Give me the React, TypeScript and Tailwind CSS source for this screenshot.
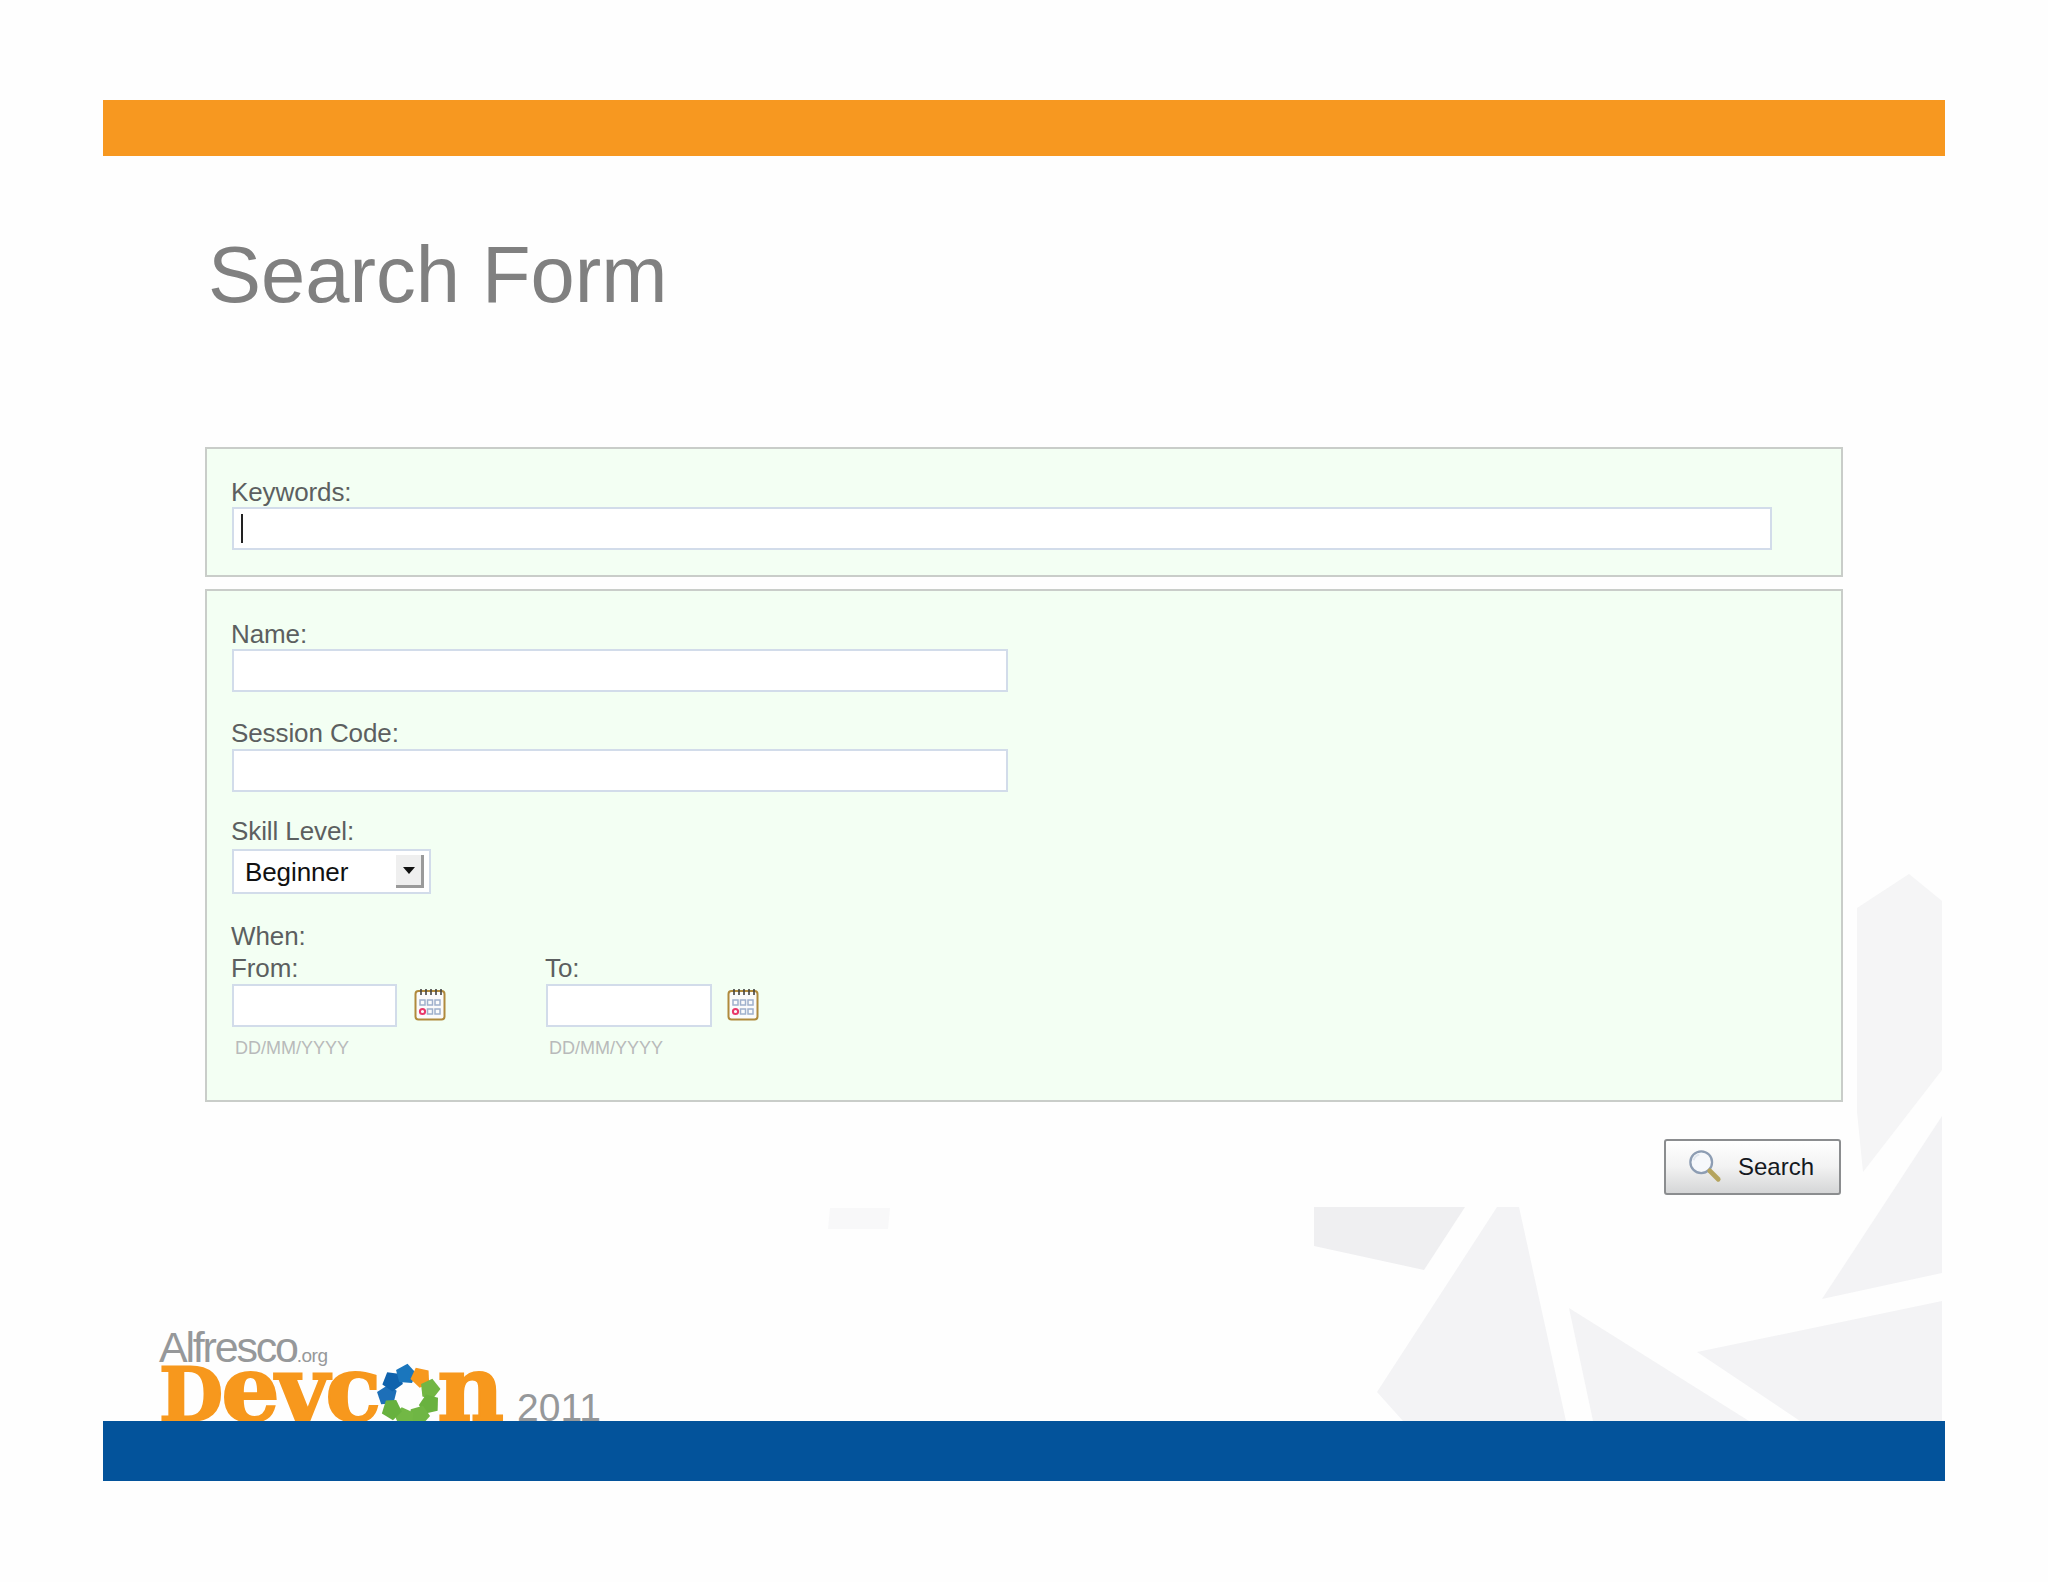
const labelClass = "block h-[30px] text-[26px] leading-[30px] tracking-[-0.1px] text-[#5c5f60]";
const inputClass = "block ml-px h-[43px] border-2 border-[#d2dcea] bg-white";

const BLADES = [
  { angle: 270, fill: "#1d6fb8" },
  { angle: 310, fill: "#0f62ad" },
  { angle: 350, fill: "#1a76bd" },
  { angle: 30, fill: "#f7981d" },
  { angle: 70, fill: "#72b644" },
  { angle: 110, fill: "#69b23f" },
  { angle: 150, fill: "#6fb644" },
  { angle: 190, fill: "#72b845" },
  { angle: 230, fill: "#67b13f" },
];

function Backdrop() {
  return (
    <svg className="absolute inset-0" width="2048" height="1582" viewBox="0 0 2048 1582">
      <g fill="#f3f3f5">
        <polygon points="1857,908 1909,874 1942,901 1942,1070 1863,1172 1857,1112" fill="#f5f5f6" />
        <polygon points="1942,1116 1942,1273 1822,1299" />
        <polygon points="1314,1207 1465,1207 1424,1270 1314,1246" fill="#efeff1" />
        <polygon points="1497,1207 1519,1207 1566,1421 1403,1421 1377,1392" />
        <polygon points="1569,1308 1749,1421 1593,1421" />
        <polygon points="1697,1352 1942,1301 1942,1421 1800,1421" />
        <polygon points="830,1208 890,1208 888,1229 828,1229" fill="#f8f8f9" />
      </g>
    </svg>
  );
}

function CalendarIcon() {
  return (
    <svg width="32" height="33" viewBox="0 0 32 33" className="shrink-0 mt-[-2px]">
      <rect x="1.5" y="3" width="29" height="28.5" rx="3" fill="#fbfbfb" stroke="#b08a3c" strokeWidth="2" />
      <path d="M7 1v6M12 1v6M17 1v6M22 1v6M27 1v6" stroke="#444" strokeWidth="1.6" />
      <g fill="none" stroke="#9fb0cc" strokeWidth="1.5">
        <rect x="6" y="12" width="5" height="5" />
        <rect x="13.5" y="12" width="5" height="5" />
        <rect x="21" y="12" width="5" height="5" />
        <rect x="13.5" y="21" width="5" height="5" />
        <rect x="21" y="21" width="5" height="5" />
      </g>
      <circle cx="8.5" cy="23.5" r="2.6" fill="none" stroke="#e8386a" strokeWidth="2" />
    </svg>
  );
}

function MagnifierIcon() {
  return (
    <svg width="34" height="34" viewBox="0 0 36 36" className="shrink-0 mt-[-2px]">
      <circle cx="14" cy="14" r="11.5" fill="#f6f8fb" stroke="#8d9db3" strokeWidth="2.4" />
      <path d="M6 12a8 8 0 0 1 6-6" fill="none" stroke="#dfe6ee" strokeWidth="2" />
      <path d="M23 23l9 9" stroke="#b5a45e" strokeWidth="5" strokeLinecap="round" />
    </svg>
  );
}

function Pinwheel() {
  return (
    <svg width="66" height="66" viewBox="-32 -32 64 64" className="shrink-0 ml-[-1px] mr-[-5px] self-end mb-[-8px]">
      {BLADES.map((b) => (
        <polygon
          key={b.angle}
          points="-8,-27 4,-31 11,-20 5,-12 -7,-15"
          fill={b.fill}
          transform={`rotate(${b.angle})`}
        />
      ))}
    </svg>
  );
}

function DateField({ label, inputWidth, gap }: { label: string; inputWidth: string; gap: string }) {
  return (
    <div>
      <div className="h-[32px] text-[26px] leading-[32px] tracking-[-0.1px] text-[#5c5f60]">{label}</div>
      <div className="flex items-center">
        <input readOnly className={`${inputClass} ${inputWidth} ${gap}`} />
        <CalendarIcon />
      </div>
      <div className="mt-[8px] ml-[4px] h-[26px] text-[18px] leading-[26px] text-[#b8baba]">DD/MM/YYYY</div>
    </div>
  );
}

export default function App() {
  return (
    <div className="relative w-[2048px] h-[1582px] overflow-hidden bg-[#fefefe] font-['Liberation_Sans',Arial,sans-serif]">
      <Backdrop />
      <div className="relative flex h-full flex-col pt-[100px] pb-[101px]">
        <div className="mx-[103px] h-[56px] shrink-0 bg-[#f79820]" />

        <h1 className="ml-[208px] mt-[74px] text-[79.5px] leading-[90px] text-[#808080]">Search Form</h1>

        <form className="ml-[205px] mt-[127px] w-[1638px]">
          <section className="h-[130px] border-2 border-[#c9cdc9] bg-[#f3fff3] pl-[24px] pt-[28px]">
            <label className={labelClass}>Keywords:</label>
            <div className={`${inputClass} w-[1540px] flex items-center pl-[7px]`}>
              <span className="h-[29px] w-[2px] bg-[#222]" />
            </div>
          </section>

          <section className="mt-[12px] h-[513px] border-2 border-[#c9cdc9] bg-[#f3fff3] pl-[24px] pt-[28px]">
            <label className={labelClass}>Name:</label>
            <input readOnly className={`${inputClass} w-[776px]`} />

            <label className={`${labelClass} mt-[26px] mb-px`}>Session Code:</label>
            <input readOnly className={`${inputClass} w-[776px]`} />

            <label className={`${labelClass} mt-[24px] mb-[3px]`}>Skill Level:</label>
            <div className="ml-px flex h-[45px] w-[199px] items-center justify-between border-2 border-[#d2dcea] bg-white pl-[11px] pr-[5px]">
              <span className="text-[26px] leading-none tracking-[-0.1px] text-[#111]">Beginner</span>
              <span className="flex h-[33px] w-[28px] items-center justify-center border-r-[3px] border-b-[3px] border-r-[#9a9a9a] border-b-[#9a9a9a] bg-[#efefef]">
                <svg width="12" height="7" viewBox="0 0 12 7">
                  <path d="M0 0h12L6 7z" fill="#111" />
                </svg>
              </span>
            </div>

            <div className="mt-[26px] h-[32px] text-[26px] leading-[32px] tracking-[-0.1px] text-[#5c5f60]">When:</div>
            <div className="flex gap-[99px]">
              <DateField label="From:" inputWidth="w-[165px]" gap="mr-[17px]" />
              <DateField label="To:" inputWidth="w-[166px]" gap="mr-[15px]" />
            </div>
          </section>

          <div className="mt-[37px] flex justify-end pr-[2px]">
            <button
              type="button"
              className="flex h-[56px] w-[177px] items-center rounded-[3px] border-2 border-[#8b8d8f] bg-gradient-to-b from-white via-[#f2f2f2] to-[#d5d6d7] pl-[22px] text-[24px] text-[#15191f]"
            >
              <MagnifierIcon />
              <span className="ml-[16px]">Search</span>
            </button>
          </div>
        </form>

        <div className="mt-auto ml-[159px] shrink-0">
          <div className="mb-[-13px] flex items-baseline text-[#96989a]">
            <span className="text-[43px] leading-[40px] tracking-[-2.2px]">Alfresco</span>
            <span className="text-[19px] leading-[40px] tracking-[-0.5px]">.org</span>
          </div>
          <div className="flex h-[58px] items-baseline font-['DejaVu_Serif',serif] font-bold text-[#f7981d] [-webkit-text-stroke:2px_#f7981d]">
            <span className="text-[74px] leading-[58px] tracking-[-2px]">D</span>
            <span className="text-[92px] leading-[52px] tracking-[-4px]">evc</span>
            <Pinwheel />
            <span className="text-[92px] leading-[52px]">n</span>
            <span className="ml-[13px] font-['Liberation_Sans',sans-serif] text-[39px] font-normal leading-[44px] text-[#96989a] [-webkit-text-stroke:0]">
              2011
            </span>
          </div>
        </div>

        <div className="relative mx-[103px] h-[60px] shrink-0 bg-[#03539b]" />
      </div>
    </div>
  );
}
